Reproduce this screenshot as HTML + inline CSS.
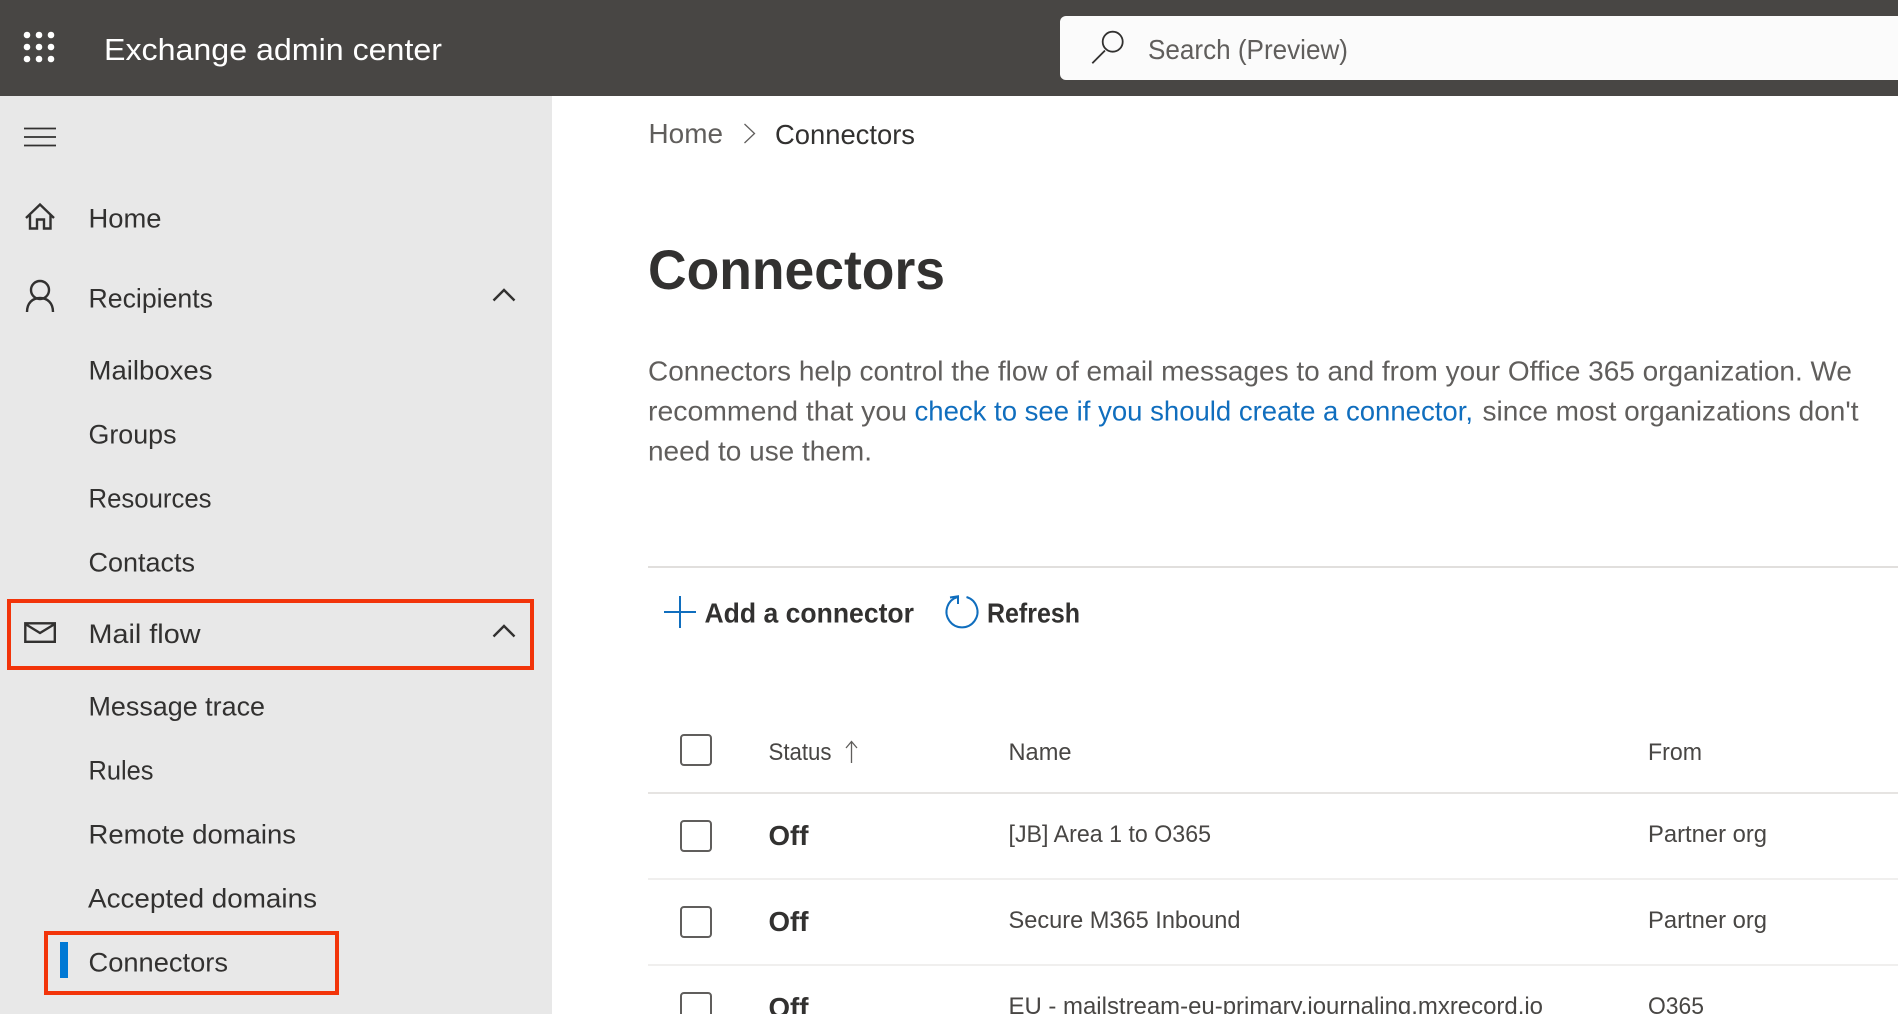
<!DOCTYPE html>
<html lang="en">
<head>
<meta charset="utf-8">
<title>Exchange admin center</title>
<style>
html,body{margin:0;padding:0;width:1898px;height:1014px;overflow:hidden;background:#fff}
svg{display:block;position:absolute;left:0;top:0}
text{font-family:"Liberation Sans",Arial,sans-serif;white-space:pre}
.n{font-size:26.5px;fill:#323130}
.p{font-size:28px;fill:#605e5c}
.t{font-size:24.500px;fill:#484644}
.b{font-weight:700;font-size:28px;fill:#323130}
.i{fill:none;stroke:#323130;stroke-width:2.4}
</style>
</head>
<body>
<svg width="1898" height="1014" viewBox="0 0 1898 1014" xmlns="http://www.w3.org/2000/svg">
<rect width="1898" height="1014" fill="#fff"/>
<rect x="0" y="96" width="552" height="918" fill="#e8e8e8"/>
<rect width="1898" height="96" fill="#484644"/>

<!-- waffle -->
<g fill="#fff">
<circle cx="27" cy="35" r="3.300"/><circle cx="39" cy="35" r="3.300"/><circle cx="51" cy="35" r="3.300"/>
<circle cx="27" cy="47" r="3.300"/><circle cx="39" cy="47" r="3.300"/><circle cx="51" cy="47" r="3.300"/>
<circle cx="27" cy="59" r="3.300"/><circle cx="39" cy="59" r="3.300"/><circle cx="51" cy="59" r="3.300"/>
</g>
<text x="104" y="60" font-size="31" fill="#fff" textLength="338" lengthAdjust="spacingAndGlyphs">Exchange admin center</text>

<!-- search -->
<path d="M1898 16H1066a6 6 0 0 0-6 6v52a6 6 0 0 0 6 6h832z" fill="#fbfbfb"/>
<circle cx="1112.700" cy="41.700" r="10" fill="none" stroke="#323130" stroke-width="1.800"/>
<path d="M1105 50.500L1092.300 63.300" fill="none" stroke="#323130" stroke-width="1.800"/>
<text x="1148" y="59" font-size="28" fill="#605e5c" textLength="200" lengthAdjust="spacingAndGlyphs">Search (Preview)</text>

<!-- sidebar icons -->
<path d="M24 128.500H56M24 137H56M24 145.500H56" fill="none" stroke="#323130" stroke-width="1.800"/>
<path d="M26 218L40 204.500L54 218M30 215V228.500H37V219.500H44V228.500H50.500V215" class="i"/>
<circle cx="40" cy="290" r="9" class="i"/>
<path d="M27 312c0-9 5.500-14 13-14s13 5 13 14" class="i"/>
<path d="M493.500 300.500L504 290L514.500 300.500" class="i"/>
<rect x="25.300" y="623.300" width="29.500" height="18.500" class="i"/>
<path d="M25.300 624L40 633L54.800 624" class="i"/>
<path d="M493.500 636.500L504 626L514.500 636.500" class="i"/>

<!-- sidebar text -->
<text class="n" x="88.500" y="227.500" textLength="73" lengthAdjust="spacingAndGlyphs">Home</text>
<text class="n" x="88.500" y="307.500" textLength="124.500" lengthAdjust="spacingAndGlyphs">Recipients</text>
<text class="n" x="88.500" y="379.500" textLength="124" lengthAdjust="spacingAndGlyphs">Mailboxes</text>
<text class="n" x="88.500" y="443.500" textLength="88" lengthAdjust="spacingAndGlyphs">Groups</text>
<text class="n" x="88.500" y="507.500" textLength="123" lengthAdjust="spacingAndGlyphs">Resources</text>
<text class="n" x="88.500" y="571.500" textLength="106.500" lengthAdjust="spacingAndGlyphs">Contacts</text>
<text class="n" x="88.500" y="643" textLength="112" lengthAdjust="spacingAndGlyphs">Mail flow</text>
<text class="n" x="88.500" y="715.500" textLength="176.500" lengthAdjust="spacingAndGlyphs">Message trace</text>
<text class="n" x="88.500" y="779.500" textLength="65" lengthAdjust="spacingAndGlyphs">Rules</text>
<text class="n" x="88.500" y="843.500" textLength="207.500" lengthAdjust="spacingAndGlyphs">Remote domains</text>
<text class="n" x="88" y="907.500" textLength="229" lengthAdjust="spacingAndGlyphs">Accepted domains</text>
<text class="n" x="88.500" y="971.500" textLength="139.500" lengthAdjust="spacingAndGlyphs">Connectors</text>
<rect x="60" y="942" width="8" height="36" fill="#0078d4"/>

<!-- highlight boxes -->
<rect x="9" y="601" width="523" height="67" fill="none" stroke="#f2340a" stroke-width="4"/>
<rect x="46" y="933" width="291" height="60" fill="none" stroke="#f2340a" stroke-width="4"/>

<!-- breadcrumb -->
<text x="648.500" y="143" font-size="28" fill="#605e5c" textLength="74.500" lengthAdjust="spacingAndGlyphs">Home</text>
<path d="M744.500 124L754.500 133.500L744.500 143" fill="none" stroke="#605e5c" stroke-width="1.300"/>
<text x="775" y="144" font-size="28" fill="#323130" textLength="140" lengthAdjust="spacingAndGlyphs">Connectors</text>

<!-- heading -->
<text x="648" y="289" font-size="56" font-weight="700" fill="#323130" textLength="297" lengthAdjust="spacingAndGlyphs">Connectors</text>

<!-- paragraph -->
<text class="p" x="648" y="380.500" textLength="1204" lengthAdjust="spacingAndGlyphs">Connectors help control the flow of email messages to and from your Office 365 organization. We</text>
<text class="p" x="648" y="420.500" textLength="259" lengthAdjust="spacingAndGlyphs">recommend that you</text>
<text x="914.500" y="420.500" font-size="28" fill="#106ebe" textLength="558.500" lengthAdjust="spacingAndGlyphs">check to see if you should create a connector,</text>
<text class="p" x="1482.500" y="420.500" textLength="376" lengthAdjust="spacingAndGlyphs">since most organizations don't</text>
<text class="p" x="648" y="460.500" textLength="224" lengthAdjust="spacingAndGlyphs">need to use them.</text>

<rect x="648" y="566" width="1250" height="2" fill="#e1dfdd"/>

<!-- toolbar -->
<path d="M664 612H696M680 596V628" fill="none" stroke="#106ebe" stroke-width="2"/>
<text class="b" x="704.500" y="622.500" textLength="209.500" lengthAdjust="spacingAndGlyphs">Add a connector</text>
<path d="M966.500 597A15.500 15.500 0 1 1 957.500 597" fill="none" stroke="#106ebe" stroke-width="2"/>
<path d="M950 597.500L958 596.300V604" fill="none" stroke="#106ebe" stroke-width="2"/>
<text class="b" x="987" y="622.500" textLength="93" lengthAdjust="spacingAndGlyphs">Refresh</text>

<!-- table -->
<rect x="681" y="735" width="30" height="30" rx="3" fill="none" stroke="#605e5c" stroke-width="2"/>
<text class="t" x="768.500" y="760" textLength="63" lengthAdjust="spacingAndGlyphs">Status</text>
<path d="M851.500 763V742M846 748L851.500 741.500L857 748" fill="none" stroke="#605e5c" stroke-width="1.300"/>
<text class="t" x="1008.500" y="760" textLength="63" lengthAdjust="spacingAndGlyphs">Name</text>
<text class="t" x="1648" y="760" textLength="54" lengthAdjust="spacingAndGlyphs">From</text>
<rect x="648" y="792" width="1250" height="2" fill="#e6e4e2"/>

<rect x="681" y="821" width="30" height="30" rx="3" fill="none" stroke="#605e5c" stroke-width="2"/>
<text class="b" x="768.500" y="845" textLength="40" lengthAdjust="spacingAndGlyphs">Off</text>
<text class="t" x="1008.500" y="842" textLength="202.500" lengthAdjust="spacingAndGlyphs">[JB] Area 1 to O365</text>
<text class="t" x="1648" y="842" textLength="119" lengthAdjust="spacingAndGlyphs">Partner org</text>
<rect x="648" y="878" width="1250" height="2" fill="#f0efee"/>

<rect x="681" y="907" width="30" height="30" rx="3" fill="none" stroke="#605e5c" stroke-width="2"/>
<text class="b" x="768.500" y="931" textLength="40" lengthAdjust="spacingAndGlyphs">Off</text>
<text class="t" x="1008.500" y="928" textLength="232" lengthAdjust="spacingAndGlyphs">Secure M365 Inbound</text>
<text class="t" x="1648" y="928" textLength="119" lengthAdjust="spacingAndGlyphs">Partner org</text>
<rect x="648" y="964" width="1250" height="2" fill="#f0efee"/>

<rect x="681" y="993" width="30" height="30" rx="3" fill="none" stroke="#605e5c" stroke-width="2"/>
<text class="b" x="768.500" y="1017" textLength="40" lengthAdjust="spacingAndGlyphs">Off</text>
<text class="t" x="1008.500" y="1014" textLength="534.500" lengthAdjust="spacingAndGlyphs">EU - mailstream-eu-primary.journaling.mxrecord.io</text>
<text class="t" x="1648" y="1014" textLength="56" lengthAdjust="spacingAndGlyphs">O365</text>
</svg>
</body>
</html>
